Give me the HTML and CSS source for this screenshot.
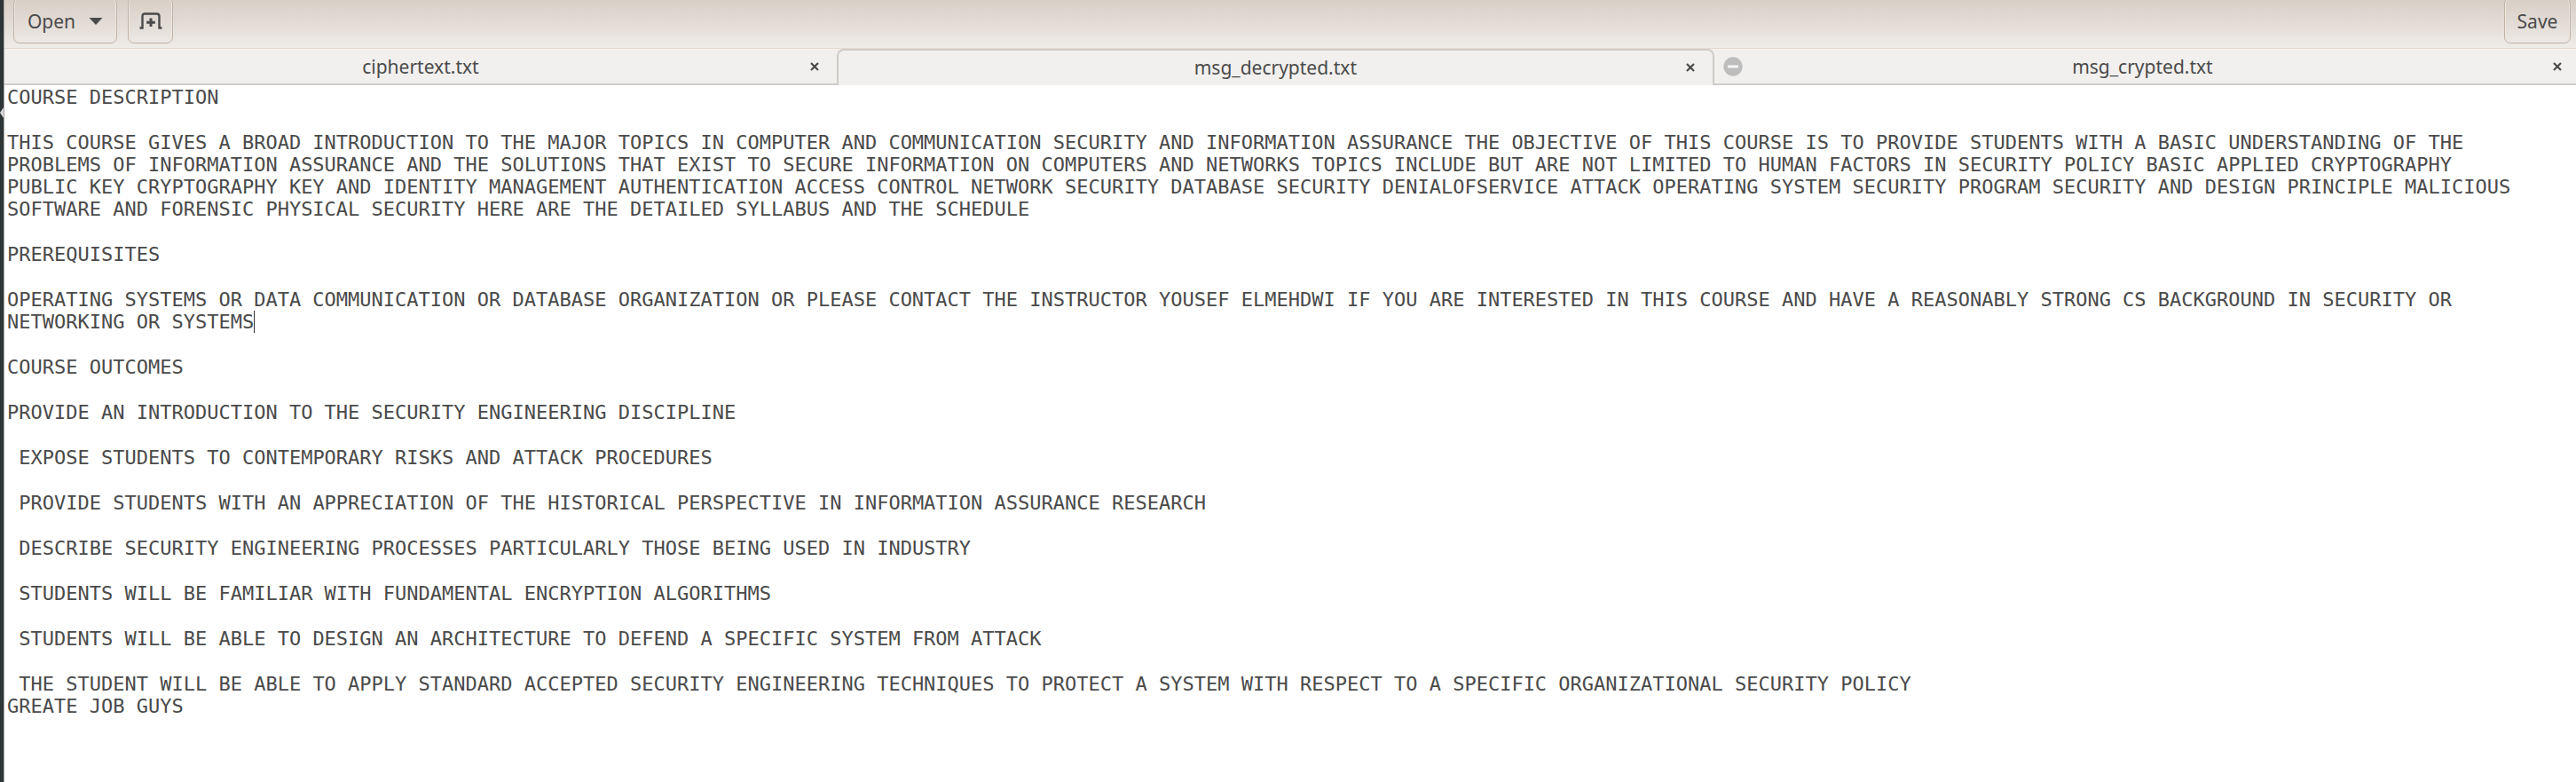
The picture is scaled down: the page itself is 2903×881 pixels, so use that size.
FILE: index.html
```html
<!DOCTYPE html>
<html lang="en">
<head>
<meta charset="utf-8">
<title>msg_decrypted.txt</title>
<link rel="stylesheet" href="styles.css">
</head>
<body>
<aside class="launcher"><span class="launcher-mark"></span></aside>
<div class="window">
<header class="toolbar">
<button class="button button-open" type="button">Open
<svg class="caret-icon" width="16" height="8" viewBox="0 0 16 8"><path d="M0.5 0h15L8 8z" fill="currentColor"/></svg>
</button>
<button class="button button-new" type="button" aria-label="New tab">
<svg width="26" height="20" viewBox="0 0 26 20"><path d="M0.5 17.5H3.5V4.5Q3.5 1.5 6.500 1.500H19.500Q22.500 1.500 22.500 4.500V17.500H25.500" fill="none" stroke="currentColor" stroke-width="2.400"/><path d="M13 6.500V16M8.200 11.200H17.800" stroke="currentColor" stroke-width="3" fill="none"/></svg>
</button>
<button class="button button-save" type="button">Save</button>
</header>
<nav class="tabs">
<div class="tab tab-first">
<button class="tab-title" type="button">ciphertext.txt</button>
<button class="tab-close" type="button" aria-label="Close ciphertext.txt"><svg width="10" height="10" viewBox="0 0 10 10"><path d="M1 1L9 9M9 1L1 9" stroke="currentColor" stroke-width="2.200"/></svg></button>
</div>
<div class="tab tab-active">
<button class="tab-title" type="button">msg_decrypted.txt</button>
<button class="tab-close" type="button" aria-label="Close msg_decrypted.txt"><svg width="10" height="10" viewBox="0 0 10 10"><path d="M1 1L9 9M9 1L1 9" stroke="currentColor" stroke-width="2.200"/></svg></button>
</div>
<div class="tab tab-last">
<svg class="tab-status" width="22" height="22" viewBox="0 0 22 22"><circle cx="11" cy="11" r="10.700" fill="#bdbdbd"/><rect x="5" y="9.500" width="12" height="3" fill="#f6f5f4"/></svg>
<button class="tab-title" type="button">msg_crypted.txt</button>
<button class="tab-close" type="button" aria-label="Close msg_crypted.txt"><svg width="10" height="10" viewBox="0 0 10 10"><path d="M1 1L9 9M9 1L1 9" stroke="currentColor" stroke-width="2.200"/></svg></button>
</div>
</nav>
<main class="editor" role="textbox" aria-multiline="true" aria-label="Document text" contenteditable="true" spellcheck="false"><p>COURSE DESCRIPTION</p><p>THIS COURSE GIVES A BROAD INTRODUCTION TO THE MAJOR TOPICS IN COMPUTER AND COMMUNICATION SECURITY AND INFORMATION ASSURANCE THE OBJECTIVE OF THIS COURSE IS TO PROVIDE STUDENTS WITH A BASIC UNDERSTANDING OF THE PROBLEMS OF INFORMATION ASSURANCE AND THE SOLUTIONS THAT EXIST TO SECURE INFORMATION ON COMPUTERS AND NETWORKS TOPICS INCLUDE BUT ARE NOT LIMITED TO HUMAN FACTORS IN SECURITY POLICY BASIC APPLIED CRYPTOGRAPHY PUBLIC KEY CRYPTOGRAPHY KEY AND IDENTITY MANAGEMENT AUTHENTICATION ACCESS CONTROL NETWORK SECURITY DATABASE SECURITY DENIALOFSERVICE ATTACK OPERATING SYSTEM SECURITY PROGRAM SECURITY AND DESIGN PRINCIPLE MALICIOUS SOFTWARE AND FORENSIC PHYSICAL SECURITY HERE ARE THE DETAILED SYLLABUS AND THE SCHEDULE</p><p>PREREQUISITES</p><p>OPERATING SYSTEMS OR DATA COMMUNICATION OR DATABASE ORGANIZATION OR PLEASE CONTACT THE INSTRUCTOR YOUSEF ELMEHDWI IF YOU ARE INTERESTED IN THIS COURSE AND HAVE A REASONABLY STRONG CS BACKGROUND IN SECURITY OR NETWORKING OR SYSTEMS<span class="cursor"></span></p><p>COURSE OUTCOMES</p><p>PROVIDE AN INTRODUCTION TO THE SECURITY ENGINEERING DISCIPLINE</p><p> EXPOSE STUDENTS TO CONTEMPORARY RISKS AND ATTACK PROCEDURES</p><p> PROVIDE STUDENTS WITH AN APPRECIATION OF THE HISTORICAL PERSPECTIVE IN INFORMATION ASSURANCE RESEARCH</p><p> DESCRIBE SECURITY ENGINEERING PROCESSES PARTICULARLY THOSE BEING USED IN INDUSTRY</p><p> STUDENTS WILL BE FAMILIAR WITH FUNDAMENTAL ENCRYPTION ALGORITHMS</p><p> STUDENTS WILL BE ABLE TO DESIGN AN ARCHITECTURE TO DEFEND A SPECIFIC SYSTEM FROM ATTACK</p><p> THE STUDENT WILL BE ABLE TO APPLY STANDARD ACCEPTED SECURITY ENGINEERING TECHNIQUES TO PROTECT A SYSTEM WITH RESPECT TO A SPECIFIC ORGANIZATIONAL SECURITY POLICY
GREATE JOB GUYS</p></main>
</div>
</body>
</html>
```
FILE: styles.css
```css
* {
  box-sizing: border-box;
}

body {
  margin: 0;
  min-height: 100vh;
  display: flex;
  overflow: hidden;
  background: #fff;
  color: #4a4a4a;
  font-family: "Noto Sans", "Open Sans", sans-serif;
  font-size: 21px;
}

button {
  font: inherit;
  color: inherit;
  background: none;
  border: 0;
  padding: 0;
}

svg {
  display: block;
}

/* Edge of the desktop launcher, with the running-app arrow */
.launcher {
  flex: none;
  width: 5px;
  background: #2e3536;
  border-right: 1px solid #a5a3a0;
  padding-top: 121px;
}

.launcher-mark {
  display: block;
  border-top: 6px solid transparent;
  border-bottom: 6px solid transparent;
  border-right: 4px solid #d8d8d8;
}

.window {
  flex: 1;
  min-width: 0;
  display: flex;
  flex-direction: column;
}

.toolbar {
  display: flex;
  gap: 12px;
  height: 55px;
  padding: 0 6px 5px 10px;
  background: linear-gradient(#d9cfc5, #e1d9d3 40%, #efece8);
  border-bottom: 1px solid #e5dad1;
}

.button {
  display: flex;
  align-items: center;
  justify-content: center;
  margin-top: -3px;
  padding-top: 2px;
  border: 1px solid #c2b3a5;
  border-radius: 7px;
  box-shadow: inset 0 0 0 1px #ece6e1;
}

.button-open {
  gap: 15px;
  width: 117px;
}

.button-new {
  width: 51px;
}

.button-save {
  width: 75px;
  margin-left: auto;
}

.tabs {
  display: flex;
  height: 41px;
  background: #f1f0ee;
}

.tab {
  flex: 20 1 0;
  display: grid;
  grid-template-columns: 1fr auto 1fr;
  align-items: center;
  padding: 0 20px;
  border-bottom: 2px solid #cfcdca;
}

.tab-first {
  flex-grow: 19;
}

.tab-active {
  border: 2px solid #cfccc8;
  border-bottom: 0;
  border-radius: 8px 8px 0 0;
  padding-bottom: 2px;
}

.tab-last {
  padding: 0 16px 0 10px;
}

.tab-status {
  grid-column: 1;
}

.tab-title {
  grid-column: 2;
  line-height: 36px;
}

.tab-close {
  grid-column: 3;
  justify-self: end;
}

.editor {
  flex: 1;
  display: flex;
  flex-direction: column;
  gap: 26px;
  padding: 1px 64px 0 3px;
  outline: 0;
  font-family: "DejaVu Sans Mono", "Liberation Mono", monospace;
  font-size: 22px;
  line-height: 25px;
  white-space: pre-wrap;
}

.editor p {
  margin: 0;
}

.cursor {
  display: inline-block;
  width: 1px;
  height: 25px;
  background: #333;
  vertical-align: top;
}
```
